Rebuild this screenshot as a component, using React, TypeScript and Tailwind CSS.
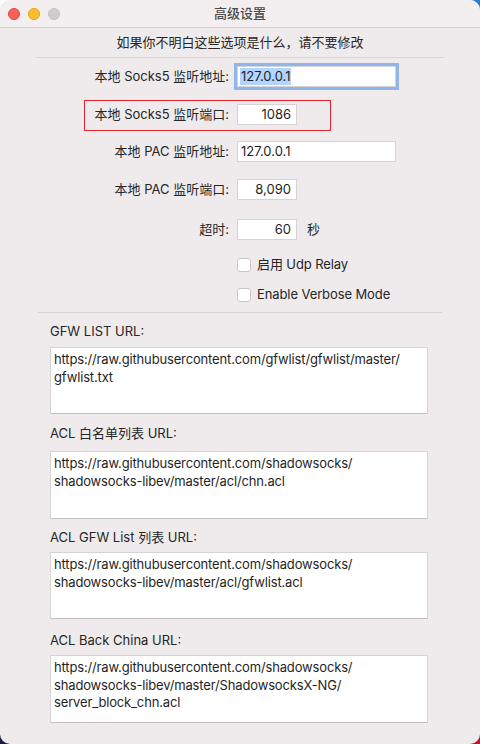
import { useState } from "react";

const FONT = "font-['Inter','Noto_Sans_CJK_SC',sans-serif]";

const URL_FIELDS = [
  {
    label: "GFW LIST URL:",
    value: "https://raw.githubusercontent.com/gfwlist/gfwlist/master/gfwlist.txt",
    labelGap: "mt-[10px]",
    boxGap: "mt-[8px]",
    h: "h-[67px]",
  },
  {
    label: "ACL 白名单列表 URL:",
    value: "https://raw.githubusercontent.com/shadowsocks/shadowsocks-libev/master/acl/chn.acl",
    labelGap: "mt-[11px]",
    boxGap: "mt-[10px]",
    h: "h-[68px]",
  },
  {
    label: "ACL GFW List 列表 URL:",
    value: "https://raw.githubusercontent.com/shadowsocks/shadowsocks-libev/master/acl/gfwlist.acl",
    labelGap: "mt-[10px]",
    boxGap: "mt-[7px]",
    h: "h-[67px]",
  },
  {
    label: "ACL Back China URL:",
    value:
      "https://raw.githubusercontent.com/shadowsocks/shadowsocks-libev/master/ShadowsocksX-NG/server_block_chn.acl",
    labelGap: "mt-[13px]",
    boxGap: "mt-[7px]",
    h: "h-[68px]",
  },
];

function FieldRow({
  label,
  gap,
  children,
}: {
  label: string;
  gap: string;
  children: React.ReactNode;
}) {
  return (
    <div className={`flex items-center h-[21px] ${gap}`}>
      <span className="w-[229px] text-right text-[13px] text-[#262626] whitespace-nowrap">
        {label}
      </span>
      <div className="ml-[8px] flex items-center">{children}</div>
    </div>
  );
}

function TextBox({
  value,
  width,
  align = "left",
  focused = false,
}: {
  value: string;
  width: string;
  align?: "left" | "right";
  focused?: boolean;
}) {
  return (
    <div
      className={`${width} h-[21px] bg-white border border-[#d6d3d3] flex items-center text-[13px] text-[#1f1f1f] ${
        align === "right" ? "justify-end pr-[4px]" : "pl-[2px]"
      } ${focused ? "shadow-[0_0_0_3px_#8fb5ea] border-[#7aa7e6]" : ""}`}
    >
      {focused ? (
        <span className="bg-[#b3d4fc] leading-[17px] px-[1px]">{value}</span>
      ) : (
        <span className="px-[1px]">{value}</span>
      )}
    </div>
  );
}

function CheckRow({ label, gap }: { label: string; gap: string }) {
  const [on, setOn] = useState(false);
  return (
    <label className={`flex items-center h-[14px] ${gap} pl-[237px] cursor-default`}>
      <span
        onClick={() => setOn(!on)}
        className="w-[14px] h-[14px] rounded-[3px] bg-white border border-[#c9c6c6] flex items-center justify-center text-[10px]"
      >
        {on ? "✓" : ""}
      </span>
      <span className="ml-[6px] text-[13px] text-[#262626] tracking-[-0.1px]">{label}</span>
    </label>
  );
}

export default function App() {
  return (
    <div className="w-[480px] h-[744px] bg-[conic-gradient(#2a7ad2_0_25%,#c8102e_0_50%,#1c1d3c_0_75%,#ffffff_0)]">
      <div
        className={`${FONT} relative w-[480px] h-[744px] rounded-[10px] overflow-hidden bg-[#efebec] flex flex-col`}
      >
        {/* title bar */}
        <div className="h-[28px] shrink-0 bg-[#f3eff0] border-b border-[#d3cfd0] grid grid-cols-[1fr_auto_1fr] items-center">
          <div className="flex items-center gap-[8px] pl-[8px]">
            <span className="w-[12px] h-[12px] rounded-full bg-[#fe5f57] border border-[#e2463f]" />
            <span className="w-[12px] h-[12px] rounded-full bg-[#febc2e] border border-[#e1a116]" />
            <span className="w-[12px] h-[12px] rounded-full bg-[#cfcccd] border border-[#c2bfc0]" />
          </div>
          <span className="text-[13px] font-medium text-[#4a4a4a]">高级设置</span>
          <div />
        </div>

        <div className="h-[29px] shrink-0 flex items-center justify-center text-[13px] text-[#262626]">
          如果你不明白这些选项是什么，请不要修改
        </div>
        <div className="mx-[36px] border-t border-[#d9d5d6]" />

        <FieldRow label="本地 Socks5 监听地址:" gap="mt-[8px]">
          <TextBox value="127.0.0.1" width="w-[159px]" focused />
        </FieldRow>
        <FieldRow label="本地 Socks5 监听端口:" gap="mt-[17px]">
          <TextBox value="1086" width="w-[60px]" align="right" />
        </FieldRow>
        <FieldRow label="本地 PAC 监听地址:" gap="mt-[16px]">
          <TextBox value="127.0.0.1" width="w-[159px]" />
        </FieldRow>
        <FieldRow label="本地 PAC 监听端口:" gap="mt-[17px]">
          <TextBox value="8,090" width="w-[60px]" align="right" />
        </FieldRow>
        <FieldRow label="超时:" gap="mt-[19px]">
          <TextBox value="60" width="w-[60px]" align="right" />
          <span className="ml-[10px] text-[13px] text-[#262626]">秒</span>
        </FieldRow>

        <CheckRow label="启用 Udp Relay" gap="mt-[18px]" />
        <CheckRow label="Enable Verbose Mode" gap="mt-[16px]" />

        <div className="mx-[38px] mt-[10px] border-t border-[#d9d5d6]" />

        <div className="px-[50px] flex flex-col">
          {URL_FIELDS.map((f) => (
            <div key={f.label} className="flex flex-col">
              <span className={`${f.labelGap} h-[16px] leading-[16px] text-[13px] text-[#262626]`}>
                {f.label}
              </span>
              <div
                className={`${f.boxGap} ${f.h} w-[378px] bg-white border border-[#d6d3d3] border-b-[#c3c0c0] pl-[3px] pr-[4px] pt-[3px] text-[13px] leading-[17.5px] tracking-[-0.15px] text-[#1f1f1f] break-words`}
              >
                {f.value.replace(/\//g, "/\u200b")}
              </div>
            </div>
          ))}
        </div>

        {/* annotation around the socks5 port row */}
        <div className="absolute left-[84px] top-[100px] w-[247px] h-[31px] border border-[#e0242c] pointer-events-none" />
      </div>
    </div>
  );
}
